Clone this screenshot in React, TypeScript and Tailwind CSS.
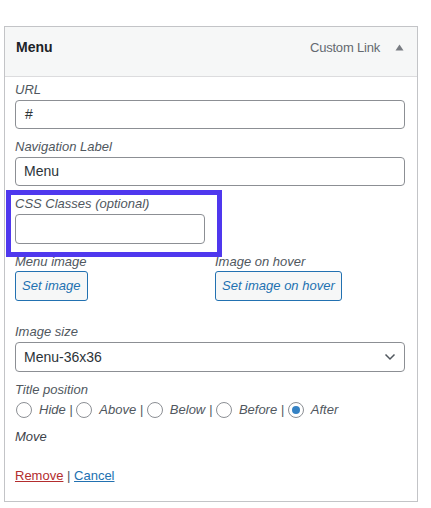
import React from 'react'

const font = { fontFamily: '"Liberation Sans", Arial, sans-serif' }

function Label({ children }: { children: React.ReactNode }) {
  return <div className="h-[18px] leading-[18px] text-[13px] italic text-[#50575e]">{children}</div>
}

function TextInput({ value, className = '' }: { value: string; className?: string }) {
  return (
    <div
      className={`mt-[1px] h-[29px] rounded-[4px] border border-[#8c8f94] bg-white px-[8px] flex items-center text-[14px] text-[#2c3338] ${className}`}
    >
      {value}
    </div>
  )
}

function ImageButton({ label }: { label: string }) {
  return (
    <button className="h-[30px] rounded-[3px] border border-[#2271b1] bg-[#f6f7f7] px-[6px] text-[13px] italic text-[#2271b1]">
      {label}
    </button>
  )
}

function Radio({ checked }: { checked?: boolean }) {
  return (
    <span className="inline-flex h-[16px] w-[16px] shrink-0 items-center justify-center rounded-full border border-[#8c8f94] bg-white">
      {checked && <span className="h-[8px] w-[8px] rounded-full bg-[#3582c4]" />}
    </span>
  )
}

export default function App() {
  const positions = ['Hide', 'Above', 'Below', 'Before', 'After']

  return (
    <div className="relative min-h-[508px] w-[431px] bg-white" style={font}>
      <div className="pt-[26px] pl-[4px]">
        <div className="w-[414px] border border-[#c3c4c7] bg-white">
          {/* Header */}
          <div className="flex h-[50px] items-center justify-between border-b border-[#dcdcde] bg-[#f6f7f7] pb-[8px] pl-[11px] pr-[13px]">
            <span className="text-[14px] font-bold text-[#1d2327]">Menu</span>
            <div className="flex items-center gap-[15px]">
              <span className="text-[13px] tracking-[-0.2px] text-[#646970]">Custom Link</span>
              <svg width="9" height="7" viewBox="0 0 9 7">
                <path d="M0.5 6.5 L4.5 0.5 L8.5 6.5 Z" fill="#787c82" />
              </svg>
            </div>
          </div>

          {/* Body */}
          <div className="pl-[10px] pr-[12px] pt-[4px] pb-[16px]">
            <Label>URL</Label>
            <TextInput value="#" className="pl-[9px]" />

            <div className="mt-[9px]">
              <Label>Navigation Label</Label>
              <TextInput value="Menu" />
            </div>

            <div className="mt-[9px]">
              <Label>CSS Classes (optional)</Label>
              <TextInput value="" className="h-[30px] w-[190px]" />
            </div>

            <div className="mt-[9px] flex">
              <div className="w-[200px]">
                <Label>Menu image</Label>
                <ImageButton label="Set image" />
              </div>
              <div>
                <Label>Image on hover</Label>
                <ImageButton label="Set image on hover" />
              </div>
            </div>

            <div className="mt-[22px]">
              <Label>Image size</Label>
              <div className="mt-[1px] flex h-[30px] items-center justify-between rounded-[4px] border border-[#8c8f94] bg-white pl-[8px] pr-[8px] text-[14px] text-[#2c3338]">
                <span>Menu-36x36</span>
                <svg width="12" height="8" viewBox="0 0 12 8">
                  <path d="M1.5 1.5 L6 6 L10.5 1.5" fill="none" stroke="#50575e" strokeWidth="1.5" />
                </svg>
              </div>
            </div>

            <div className="mt-[9px]">
              <Label>Title position</Label>
              <div className="mt-[1px] flex h-[20px] items-center pl-[1px] text-[13px] italic text-[#50575e]">
                {positions.map((p, i) => (
                  <span key={p} className="flex items-center">
                    <Radio checked={p === 'After'} />
                    <span className="ml-[7px] whitespace-pre">
                      {p}
                      {i < positions.length - 1 ? ' | ' : ''}
                    </span>
                  </span>
                ))}
              </div>
            </div>

            <div className="mt-[8px] h-[18px] leading-[18px] text-[13px] italic text-[#3c434a]">Move</div>

            <div className="mt-[21px] h-[18px] leading-[18px] text-[13px] text-[#50575e]">
              <a className="text-[#b32d2e] underline">Remove</a>
              <span> | </span>
              <a className="text-[#2271b1] underline">Cancel</a>
            </div>
          </div>
        </div>
      </div>

      {/* highlight box */}
      <div className="pointer-events-none absolute left-[6px] top-[190px] h-[67px] w-[216px] border-[5px] border-[#4f38ee]" />
    </div>
  )
}
